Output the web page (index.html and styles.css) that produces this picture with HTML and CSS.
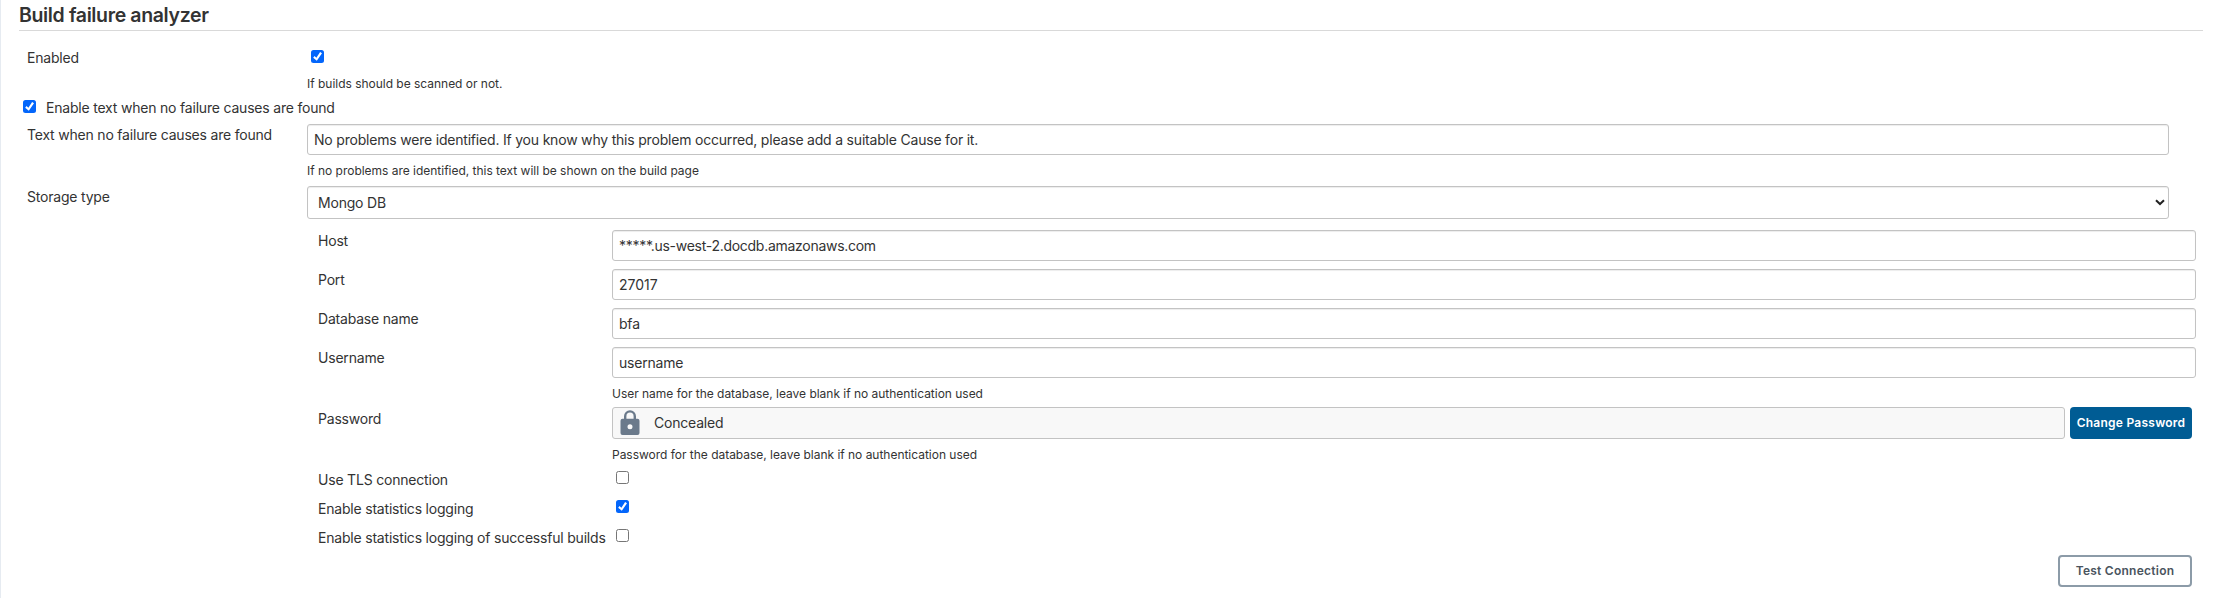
FILE: index.html
```html
<!DOCTYPE html>
<html lang="en">
<head>
<meta charset="utf-8">
<title>Build failure analyzer</title>
<link rel="stylesheet" href="styles.css">
</head>
<body>
<main class="panel">
  <h1 class="title">Build failure analyzer</h1>
  <div class="row row-enabled">
    <div class="label">Enabled</div>
    <div class="field"><input class="check" type="checkbox" checked><div class="help">If builds should be scanned or not.</div></div>
  </div>
  <label class="optional"><input class="check" type="checkbox" checked><span>Enable text when no failure causes are found</span></label>
  <div class="row row-text">
    <div class="label">Text when no failure causes are found</div>
    <div class="field"><div class="input">No problems were identified. If you know why this problem occurred, please add a suitable Cause for it.</div><div class="help">If no problems are identified, this text will be shown on the build page</div></div>
  </div>
  <div class="row row-storage">
    <div class="label">Storage type</div>
    <div class="field"><div class="input select"><span>Mongo DB</span><svg class="chevron" viewBox="0 0 10 7"><path d="M1 1.2 L5 5 L9 1.2"/></svg></div></div>
  </div>
  <section class="nested">
    <div class="row"><div class="label">Host</div><div class="field"><div class="input host">*****.us-west-2.docdb.amazonaws.com</div></div></div>
    <div class="row"><div class="label">Port</div><div class="field"><div class="input port">27017</div></div></div>
    <div class="row"><div class="label">Database name</div><div class="field"><div class="input">bfa</div></div></div>
    <div class="row row-user"><div class="label">Username</div><div class="field"><div class="input">username</div><div class="help">User name for the database, leave blank if no authentication used</div></div></div>
    <div class="row row-password">
      <div class="label">Password</div>
      <div class="field">
        <div class="secret">
          <div class="concealed"><svg class="lock" viewBox="0 0 20 26"><path class="shackle" d="M5.2 10V6.200a4.800 4.800 0 0 1 9.600 0V10"/><path class="lock-body" fill-rule="evenodd" d="M2.500 8.800h15A2 2 0 0 1 19.500 10.800V23a2 2 0 0 1-2 2h-15a2 2 0 0 1-2-2V10.800a2 2 0 0 1 2-2zM10 14.300a2.500 2.500 0 1 0 0 5a2.500 2.500 0 0 0 0-5z"/></svg><span>Concealed</span></div>
          <button class="button primary">Change Password</button>
        </div>
        <div class="help">Password for the database, leave blank if no authentication used</div>
      </div>
    </div>
    <div class="row row-check"><div class="label">Use TLS connection</div><div class="field"><input class="check" type="checkbox"></div></div>
    <div class="row row-check"><div class="label">Enable statistics logging</div><div class="field"><input class="check" type="checkbox" checked></div></div>
    <div class="row row-check"><div class="label">Enable statistics logging of successful builds</div><div class="field"><input class="check" type="checkbox"></div></div>
    <div class="actions"><button class="button outline">Test Connection</button></div>
  </section>
</main>
</body>
</html>
```
FILE: styles.css
```css
* { box-sizing: border-box; }
body { margin: 0; background: #fff; color: #333; font: 14px/20px Inter, "Liberation Sans", sans-serif; letter-spacing: -0.2px; }
.panel { height: 598px; border-left: 1px solid #e6ebf1; padding: 0 15px 0 18px; overflow: hidden; }
.title { height: 31px; margin: 0; border-bottom: 1px solid #d9d9d9; font-size: 19.5px; line-height: 31px; font-weight: 600; letter-spacing: -0.36px; }
.row { display: grid; grid-template-columns: 280px 1fr; padding: 0 34px 0 8px; white-space: nowrap; }
.row-enabled { height: 67px; padding-top: 17px; }
.row-enabled .field { padding-top: 2px; }
.row-enabled .check { margin-left: 4px; }
.row-enabled .help { margin-top: 13px; }
.check { appearance: none; display: block; flex: none; width: 13px; height: 13px; margin: 0; border: 1px solid #767676; border-radius: 2.5px; background: #fff; }
.check:checked { border: 0; background: #0366fb; }
.check:checked::before { content: ""; display: block; width: 13px; height: 13px; background: #fff; clip-path: polygon(9.1px 1.9px, 11px 3.200px, 5.800px 10.800px, 2.200px 7.700px, 3.500px 6.100px, 5.400px 7.700px); }
.help { height: 16px; margin-top: 8px; font-size: 12px; line-height: 16px; letter-spacing: -0.02px; }
.optional { display: flex; height: 26px; padding: 0 0 0 4px; gap: 10px; }
.optional .check { margin-top: 2px; }
.row-text { height: 62px; }
.row-text .label { padding-top: 1px; }
.input { display: flex; align-items: center; height: 31px; padding: 0 6px; border: 1px solid #c3c3c3; border-radius: 3px; background: #fff; box-shadow: inset 0 1px 1px rgba(0, 0, 0, .075); }
.host { letter-spacing: -0.28px; }
.port { letter-spacing: 0; }
.row-storage { height: 44px; }
.row-storage .label { padding-top: 1px; }
.select { height: 33px; padding: 0 3px 0 10px; justify-content: space-between; }
.chevron { width: 10px; height: 7px; fill: none; stroke: #222; stroke-width: 2; }
.nested { padding-left: 291px; }
.nested .row { height: 39px; grid-template-columns: 294px 1fr; padding: 0 7px 0 8px; }
.nested .row > .label { padding-top: 1px; }
.nested .row-user { height: 60px; }
.nested .row-password { height: 62px; }
.nested .row-password > .label { padding-top: 2px; }
.secret { display: flex; gap: 5px; padding-right: 4px; }
.concealed { display: flex; align-items: center; flex: 1; height: 32px; padding-left: 7px; gap: 14px; border: 1px solid #c3c3c3; border-radius: 3px; background: #f8f8f8; }
.lock { width: 20px; height: 26px; }
.shackle { fill: none; stroke: #6b7a8b; stroke-width: 2.4; }
.lock-body { fill: #6b7a8b; }
.button { height: 32px; padding: 0; border-radius: 4px; font: 600 12px/16px Inter, "Liberation Sans", sans-serif; letter-spacing: 0.25px; }
.primary { width: 122px; border: 0; background: #005c94; color: #fff; }
.outline { width: 134px; border: 2px solid #8c9ba8; background: #fff; color: #4a545e; }
.nested .row-check { height: 29px; }
.row-check .check { margin: 2px 0 0 4px; }
.actions { display: flex; justify-content: flex-end; padding-right: 11px; margin-top: -1px; }
```
